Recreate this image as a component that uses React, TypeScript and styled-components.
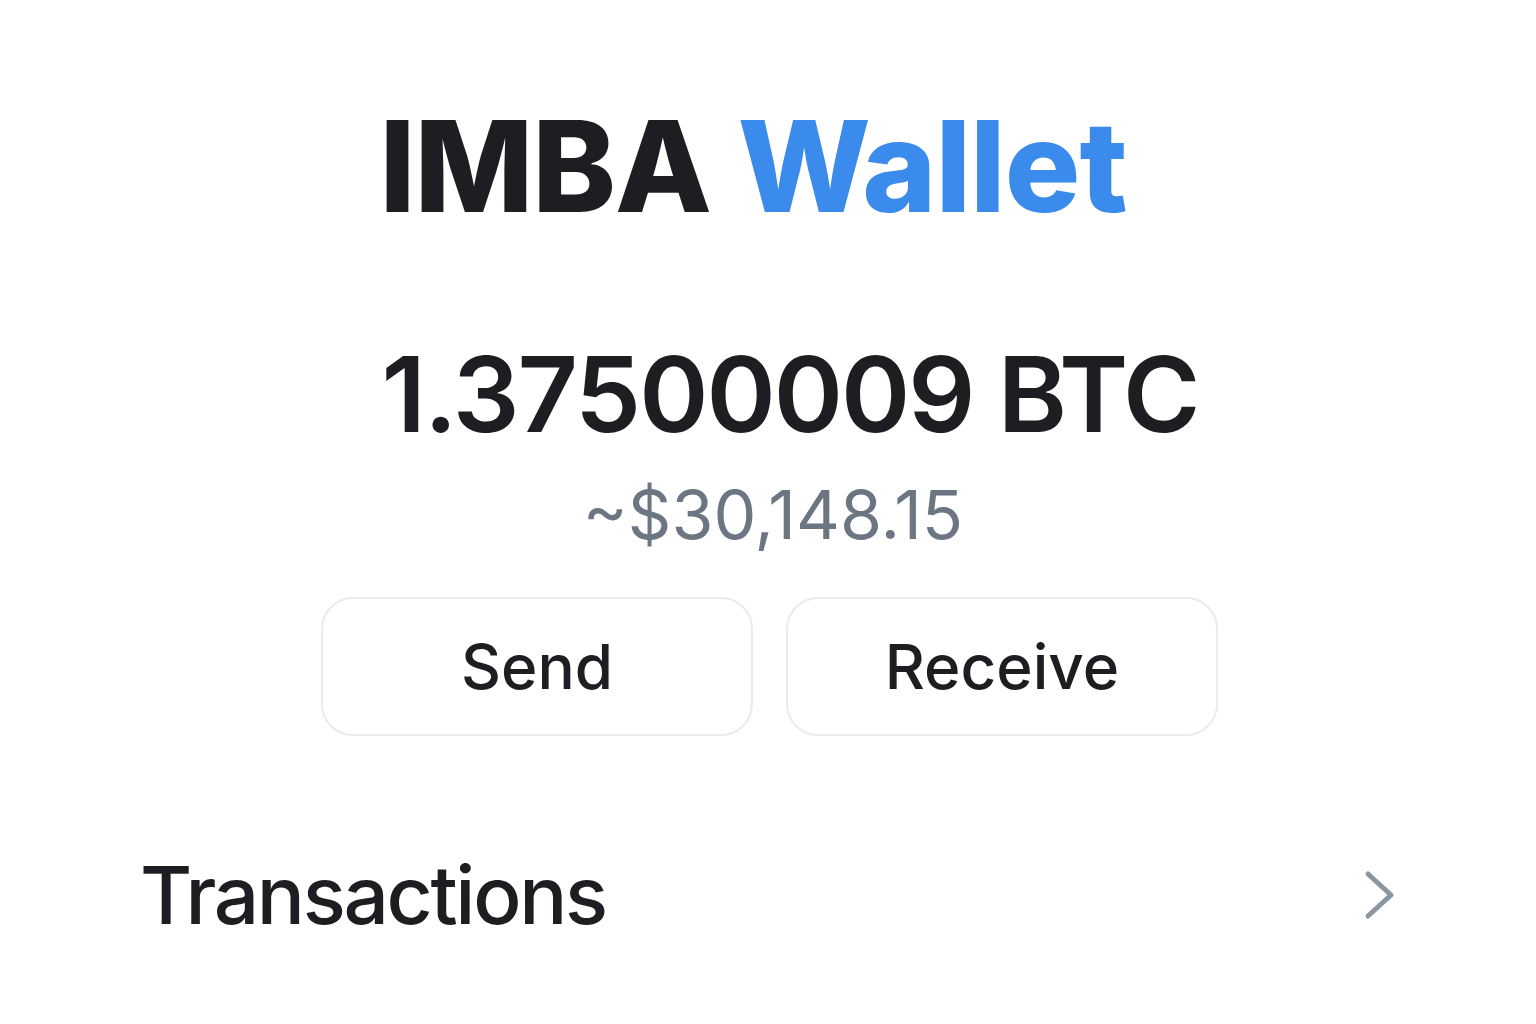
import React from "react";
import styled, { createGlobalStyle } from "styled-components";

const Global = createGlobalStyle`
  html, body { margin: 0; padding: 0; background: #ffffff; }
  body { font-family: Inter, "Liberation Sans", sans-serif; color: #1c1e21; }
`;

const Page = styled.main`
  width: 1536px;
  height: 1024px;
  display: flex;
  flex-direction: column;
  align-items: center;
  box-sizing: border-box;
  padding-top: 98px;
`;

const Title = styled.h1`
  margin: 0;
  font-size: 126px;
  font-weight: 800;
  line-height: 136px;
  letter-spacing: -1px;
  color: #1c1e21;
  margin-left: -30px;
`;

const Accent = styled.span`
  color: #3b8bec;
`;

const Balance = styled.div`
  margin-top: 100px;
  font-size: 105px;
  font-weight: 600;
  line-height: 120px;
  letter-spacing: -2px;
  color: #1c1e21;
  margin-left: 44px;
`;

const Fiat = styled.div`
  margin-top: 20px;
  font-size: 68px;
  font-weight: 400;
  line-height: 80px;
  color: #6b7682;
  margin-left: 10px;
`;

const Actions = styled.div`
  margin-top: 43px;
  display: grid;
  grid-template-columns: 432px 432px;
  gap: 33px;
  margin-left: 3px;
`;

const ActionButton = styled.button`
  height: 139px;
  border: 2px solid #e9ebee;
  border-radius: 32px;
  background: #ffffff;
  font-family: Inter, "Liberation Sans", sans-serif;
  font-size: 62px;
  font-weight: 500;
  color: #1c1e21;
  cursor: pointer;
  padding: 0;
`;

const Row = styled.div`
  margin-top: 109px;
  width: 100%;
  box-sizing: border-box;
  padding: 0 140px 0 140px;
  display: flex;
  align-items: center;
  justify-content: space-between;
`;

const RowLabel = styled.span`
  font-size: 80px;
  font-weight: 500;
  line-height: 100px;
  letter-spacing: -2.3px;
  color: #1c1e21;
`;

const Chevron = () => (
  <svg width="32" height="50" viewBox="0 0 32 50" fill="none">
    <path d="M4 4 L27 25 L4 46" stroke="#8a96a0" strokeWidth="5" strokeLinecap="round" strokeLinejoin="round" />
  </svg>
);

export default function App() {
  return (
    <>
      <Global />
      <Page>
        <Title>
          IMBA <Accent>Wallet</Accent>
        </Title>
        <Balance>1.37500009 BTC</Balance>
        <Fiat>~$30,148.15</Fiat>
        <Actions>
          <ActionButton>Send</ActionButton>
          <ActionButton>Receive</ActionButton>
        </Actions>
        <Row>
          <RowLabel>Transactions</RowLabel>
          <Chevron />
        </Row>
      </Page>
    </>
  );
}
